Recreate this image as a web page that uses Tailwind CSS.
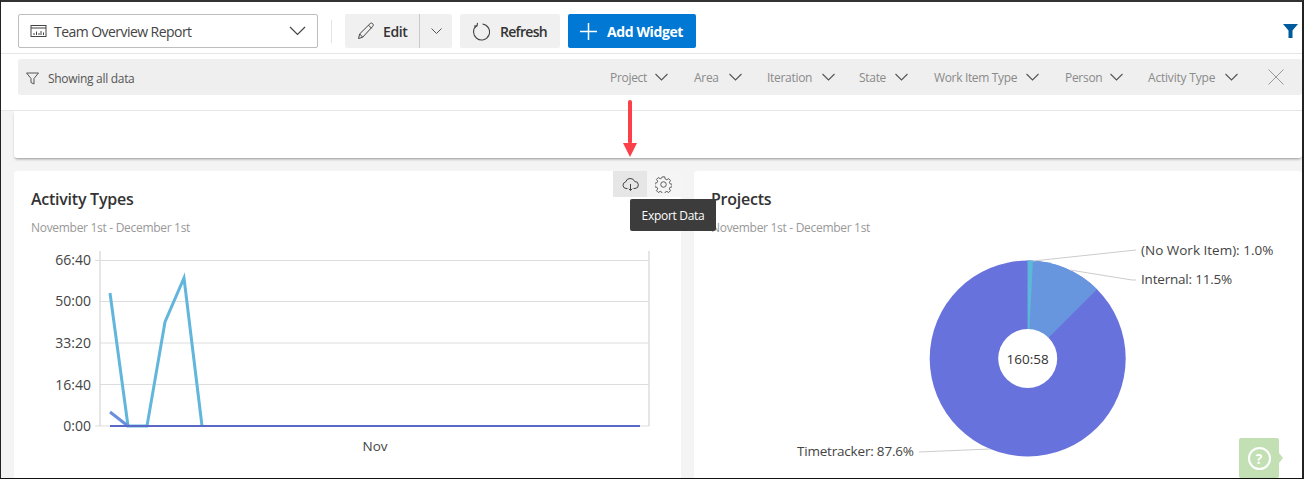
<!DOCTYPE html>
<html>
<head>
<meta charset="utf-8">
<script src="https://cdn.jsdelivr.net/npm/@tailwindcss/browser@4"></script>
</head>
<body class="m-0 bg-white">
<div class="relative w-[1304px] h-[479px] overflow-hidden font-['Open_Sans',sans-serif] border-t-2 border-l-[1px] border-r-2 border-b-[1px] border-t-[#333] border-l-[#222] border-r-[#222] border-b-[#111] flex flex-col bg-[#f4f4f4]">
  <!-- header -->
  <div class="bg-white h-[109px] shrink-0 flex flex-col border-b border-[#e6e6e6]">
    <div class="flex items-center h-[34px] mt-[12px] ml-[17px] mr-[4px]">
      <div class="w-[300px] h-[34px] border border-[#bdbdbd] rounded-[2px] flex items-center pl-[11px] pr-[11px]">
        <svg class="w-[17px] h-[14px]" viewBox="0 0 17 14" fill="none" stroke="#444" stroke-width="1"><rect x="1" y="1.5" width="15" height="11"/><path d="M1 4h15M4 11V9M6.5 11V7.500M9 11V9M11 11V7M13.500 11V8.500"/></svg>
        <span class="ml-[7px] text-[14px] tracking-[-0.55px] text-[#444] flex-1">Team Overview Report</span>
        <svg class="w-[17px] h-[10px]" viewBox="0 0 17 10" fill="none" stroke="#444" stroke-width="1.2"><path d="M1 1l7.500 7.500L16 1"/></svg>
      </div>
      <div class="w-px h-[23px] bg-[#e3e3e3] ml-[13px]"></div>
      <div class="ml-[13px] flex h-[34px] w-[107px] bg-[#f0f0f0] rounded-[2px] items-center">
        <svg class="ml-[12px] w-[18px] h-[18px]" viewBox="0 0 18 18" fill="none" stroke="#444" stroke-width="1"><path d="M1.500 16.500l1.200-4.600L13 1.700c.8-.8 2-.8 2.700 0 .8.8.8 1.900 0 2.700L5.700 15.200zM2.700 11.900l3 3.300M11.500 3.200l3.200 3.200"/></svg>
        <span class="ml-[8px] w-[36px] text-[14px] font-semibold tracking-[-0.4px] text-[#333]">Edit</span>
        <div class="w-px h-[34px] bg-[#c8c8c8]"></div>
        <svg class="ml-[11px] w-[11px] h-[7px]" viewBox="0 0 11 7" fill="none" stroke="#555" stroke-width="1"><path d="M.5.500l5 5 5-5"/></svg>
      </div>
      <div class="ml-[8px] flex h-[34px] w-[100px] bg-[#f0f0f0] rounded-[2px] items-center">
        <svg class="ml-[13px] w-[17px] h-[19px]" viewBox="0 0 17 19" fill="none" stroke="#444" stroke-width="1.1"><path d="M3.800 3.500A8 8 0 1 0 9.500 2"/><path d="M4.500 .8L4 4H1"/></svg>
        <span class="ml-[10px] text-[14px] font-semibold tracking-[-0.7px] text-[#333]">Refresh</span>
      </div>
      <div class="ml-[8px] flex h-[34px] w-[128px] bg-[#0078d4] rounded-[2px] items-center">
        <svg class="ml-[12px] w-[17px] h-[17px]" viewBox="0 0 17 17" fill="none" stroke="#fff" stroke-width="1.5"><path d="M8.500 0v17M0 8.500h17"/></svg>
        <span class="ml-[10px] text-[14px] font-bold tracking-[-0.4px] text-white">Add Widget</span>
      </div>
      <svg class="ml-auto w-[15px] h-[14px]" viewBox="0 0 15 14" fill="#005a9e"><path d="M0 0h15L9.500 6.500V14h-4V6.500z"/></svg>
    </div>
    <div class="h-px bg-[#e6e6e6] mt-[5px]"></div>
    <div class="h-[36px] mt-[5px] ml-[17px] bg-[#efefef] rounded-[3px] flex items-center text-[12px] tracking-[-0.3px] text-[#8a8a8a]">
      <svg class="ml-[8px] w-[13px] h-[13px] mt-[2px]" viewBox="0 0 13 13" fill="none" stroke="#555" stroke-width="1"><path d="M.5 1h12L8 6.500V12l-3-1.500v-4z"/></svg>
      <span class="ml-[9px] text-[#555] mt-[3px]">Showing all data</span>
      <div class="ml-auto flex items-center mr-[18px]">
        <span class="w-[36px] whitespace-nowrap mt-[1px]">Project</span>
        <svg class="ml-[9px] w-[13px] h-[8px]" viewBox="0 0 13 8" fill="none" stroke="#555" stroke-width="1.1"><path d="M.5 1l6 6 6-6"/></svg>
        <span class="ml-[26px] w-[25px] whitespace-nowrap mt-[1px]">Area</span>
        <svg class="ml-[10px] w-[13px] h-[8px]" viewBox="0 0 13 8" fill="none" stroke="#555" stroke-width="1.1"><path d="M.5 1l6 6 6-6"/></svg>
        <span class="ml-[25px] w-[45px] whitespace-nowrap mt-[1px]">Iteration</span>
        <svg class="ml-[10px] w-[13px] h-[8px]" viewBox="0 0 13 8" fill="none" stroke="#555" stroke-width="1.1"><path d="M.5 1l6 6 6-6"/></svg>
        <span class="ml-[24px] w-[27px] whitespace-nowrap mt-[1px]">State</span>
        <svg class="ml-[9px] w-[13px] h-[8px]" viewBox="0 0 13 8" fill="none" stroke="#555" stroke-width="1.1"><path d="M.5 1l6 6 6-6"/></svg>
        <span class="ml-[26px] w-[83px] whitespace-nowrap mt-[1px] tracking-[-0.35px]">Work Item Type</span>
        <svg class="ml-[9px] w-[13px] h-[8px]" viewBox="0 0 13 8" fill="none" stroke="#555" stroke-width="1.1"><path d="M.5 1l6 6 6-6"/></svg>
        <span class="ml-[26px] w-[35px] whitespace-nowrap mt-[1px]">Person</span>
        <svg class="ml-[10px] w-[13px] h-[8px]" viewBox="0 0 13 8" fill="none" stroke="#555" stroke-width="1.1"><path d="M.5 1l6 6 6-6"/></svg>
        <span class="ml-[25px] w-[67px] whitespace-nowrap mt-[1px] tracking-[-0.2px]">Activity Type</span>
        <svg class="ml-[10px] w-[13px] h-[8px]" viewBox="0 0 13 8" fill="none" stroke="#555" stroke-width="1.1"><path d="M.5 1l6 6 6-6"/></svg>
        <svg class="ml-[30px] w-[16px] h-[16px]" viewBox="0 0 16 16" fill="none" stroke="#999" stroke-width="1"><path d="M.5.500l15 15M15.500.500l-15 15"/></svg>
      </div>
    </div>
  </div>
  <!-- dashboard -->
  <div class="flex-1 pl-[13px] flex flex-col min-h-0">
    <div class="h-[47px] shrink-0 bg-white rounded-b-[3px] shadow-[0_2px_3px_-1px_rgba(0,0,0,0.4)]"></div>
    <div class="flex mt-[13px] gap-[13px] flex-1 min-h-0">
      <div class="relative w-[667px] bg-white rounded-t-[3px]">
        <div class="absolute right-0 top-0 flex h-[26px]">
          <div class="w-[34px] bg-[#e6e6e6] flex items-center justify-center">
            <svg class="w-[17px] h-[13px]" viewBox="0 0 17 13" fill="none" stroke="#444" stroke-width="1"><path d="M5.500 10.500H4a3.300 3.300 0 0 1-.4-6.500A4.800 4.800 0 0 1 12.700 3.500a3.500 3.500 0 0 1 .3 7h-1.500M8.500 6v6.500M6.800 10.800l1.700 1.700 1.700-1.700"/></svg>
          </div>
          <div class="w-[34px] bg-[#f5f5f5] flex items-center justify-center pr-[2px]">
            <svg class="w-[17px] h-[17px]" viewBox="0 0 16 16" fill="none" stroke="#555" stroke-width=".9"><circle cx="8" cy="8" r="2.600"/><path d="M6.800.8h2.400l.4 2 1.500.7 1.800-1 1.700 1.700-1.100 1.700.7 1.500 2 .4v2.400l-2 .4-.7 1.500 1.100 1.700-1.700 1.700-1.800-1-1.500.7-.4 2H6.800l-.4-2-1.500-.7-1.800 1-1.700-1.700 1.100-1.700-.7-1.500-2-.4V6.800l2-.4.7-1.500-1.100-1.700 1.700-1.700 1.800 1 1.500-.7z"/></svg>
          </div>
        </div>
        <div class="pl-[17px] pt-[18px]">
          <div class="text-[16px] leading-[20px] font-semibold tracking-[-0.25px] text-[#333]">Activity Types</div>
          <div class="mt-[11px] text-[12px] leading-[16px] tracking-[-0.3px] text-[#999]">November 1st - December 1st</div>
        </div>
        <svg class="absolute left-0 top-[78px]" width="667" height="230" viewBox="14 249 667 230" font-size="14" fill="#444">
          <path d="M100 251V426M649 251V426" stroke="#ccc" fill="none"/>
          <path d="M95 260.500H649M100 301.500H649M100 343H649M100 384.500H649M95 426H649" stroke="#ddd" fill="none"/>
          <g text-anchor="end">
            <text x="91" y="265">66:40</text>
            <text x="91" y="306">50:00</text>
            <text x="91" y="348">33:20</text>
            <text x="91" y="390">16:40</text>
            <text x="91" y="431">0:00</text>
          </g>
          <text x="375" y="451" text-anchor="middle" font-size="13.500">Nov</text>
          <path d="M110 293L128 426H147L165 322L184 278L202 426" fill="none" stroke="#62b6dc" stroke-width="3"/>
          <path d="M110 412L128 426" fill="none" stroke="#6a8fdc" stroke-width="3"/>
          <path d="M110 426H640" fill="none" stroke="#5a68c8" stroke-width="2"/>
        </svg>
      </div>
      <div class="relative flex-1 bg-white rounded-t-[3px]">
        <div class="pl-[17px] pt-[18px]">
          <div class="text-[16px] leading-[20px] font-semibold tracking-[-0.25px] text-[#333]">Projects</div>
          <div class="mt-[11px] text-[12px] leading-[16px] tracking-[-0.3px] text-[#999]">November 1st - December 1st</div>
        </div>
        <svg class="absolute left-0 top-[70px]" width="608" height="238" viewBox="694 241 608 238" font-size="14" fill="#444">
          <circle cx="1027.700" cy="358.500" r="98" fill="#6872dc"/>
          <path d="M1027.700 358.500V260.500A98 98 0 0 1 1097 289.200Z" fill="#6896de"/>
          <path d="M1027.700 358.500V260.500A98 98 0 0 1 1033 260.600Z" fill="#5cb8d8"/>
          <circle cx="1027.700" cy="358.500" r="29.500" fill="#fff"/>
          <text x="1027.700" y="364" text-anchor="middle" font-size="13.500" fill="#333">160:58</text>
          <path d="M1033 261L1136 250M1070 270L1132 280H1136M990 449L919 452" fill="none" stroke="#ccc"/>
          <text x="1141" y="255" font-size="13.500">(No Work Item): 1.0%</text>
          <text x="1141" y="284" font-size="13.500" class="tracking-[-0.2px]">Internal: 11.5%</text>
          <text x="797" y="456" font-size="13.500" class="tracking-[-0.2px]">Timetracker: 87.6%</text>
        </svg>
      </div>
    </div>
  </div>
  <!-- overlay: arrow -->
  <svg class="absolute left-[621px] top-[98px]" width="16" height="58" viewBox="0 0 16 58" fill="#fb4049"><rect x="6" y="0" width="4" height="44" rx="2"/><path d="M1 43h14l-7 14z"/></svg>
  <!-- tooltip -->
  <div class="absolute left-[629px] top-[197px] w-[86px] h-[32px] pt-[1px] rounded-[2px] bg-[#3c3c3c] text-white text-[12px] tracking-[-0.3px] flex items-center justify-center">Export Data</div>
  <!-- help -->
  <div class="absolute left-[1238px] top-[436px] w-[40px] h-[40px] bg-[#c3e0b5] rounded-[2px] flex items-center justify-center">
    <div class="w-[23px] h-[23px] rounded-full border-2 border-white text-white text-[14px] font-bold leading-[19px] text-center">?</div>
    <div class="absolute -right-[4px] top-[15px] w-0 h-0 border-y-[5px] border-y-transparent border-l-[4px] border-l-[#c3e0b5]"></div>
  </div>
</div>
</body>
</html>
